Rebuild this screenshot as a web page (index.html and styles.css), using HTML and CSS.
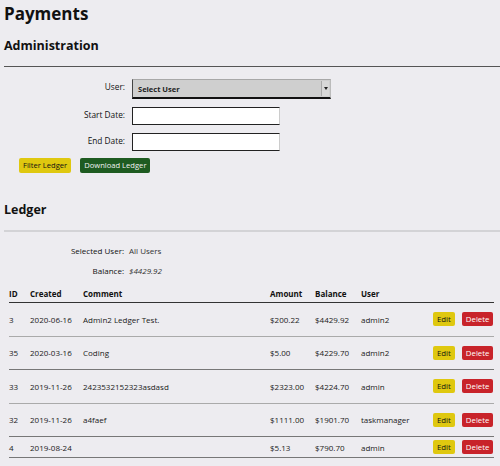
FILE: index.html
```html
<!DOCTYPE html>
<html>
<head>
<meta charset="utf-8">
<link rel="stylesheet" href="styles.css">
</head>
<body>
<div class="page">
  <h1 class="title">Payments</h1>
  <h2 class="section">Administration</h2>
  <div class="rule dark"></div>
  <div class="form">
    <label class="lbl">User:</label>
    <div class="select"><span class="sel-text">Select User</span><span class="sel-btn"><span class="tri"></span></span></div>
    <label class="lbl">Start Date:</label>
    <div class="input"></div>
    <label class="lbl">End Date:</label>
    <div class="input"></div>
  </div>
  <div class="actions">
    <span class="btn yellow">Filter Ledger</span>
    <span class="btn green">Download Ledger</span>
  </div>
  <h2 class="section ledger">Ledger</h2>
  <div class="rule light"></div>
  <div class="info">
    <span class="ilbl">Selected User:</span><span class="ival">All Users</span>
    <span class="ilbl">Balance:</span><span class="ival it">$4429.92</span>
  </div>
  <table class="tbl">
    <colgroup>
      <col class="c-id"><col class="c-created"><col class="c-comment"><col class="c-amount"><col class="c-balance"><col class="c-user"><col class="c-act">
    </colgroup>
    <thead>
      <tr><th>ID</th><th>Created</th><th>Comment</th><th>Amount</th><th>Balance</th><th>User</th><th></th></tr>
    </thead>
    <tbody>
      <tr class="tall"><td>3</td><td>2020-06-16</td><td>Admin2 Ledger Test.</td><td>$200.22</td><td>$4429.92</td><td>admin2</td><td class="act"><div class="btns"><span class="sbtn yellow">Edit</span><span class="sbtn red">Delete</span></div></td></tr>
      <tr class="tall b2"><td>35</td><td>2020-03-16</td><td>Coding</td><td>$5.00</td><td>$4229.70</td><td>admin2</td><td class="act"><div class="btns"><span class="sbtn yellow">Edit</span><span class="sbtn red">Delete</span></div></td></tr>
      <tr class="tall"><td>33</td><td>2019-11-26</td><td>2423532152323asdasd</td><td>$2323.00</td><td>$4224.70</td><td>admin</td><td class="act"><div class="btns"><span class="sbtn yellow">Edit</span><span class="sbtn red">Delete</span></div></td></tr>
      <tr class="tall b2"><td>32</td><td>2019-11-26</td><td>a4faef</td><td>$1111.00</td><td>$1901.70</td><td>taskmanager</td><td class="act"><div class="btns"><span class="sbtn yellow">Edit</span><span class="sbtn red">Delete</span></div></td></tr>
      <tr class="short b2"><td>4</td><td>2019-08-24</td><td></td><td>$5.13</td><td>$790.70</td><td>admin</td><td class="act"><div class="btns"><span class="sbtn yellow">Edit</span><span class="sbtn red">Delete</span></div></td></tr>
    </tbody>
  </table>
</div>
</body>
</html>
```
FILE: styles.css
```css
html, body {
  margin: 0;
  padding: 0;
  background: #edecf0;
}
body {
  font-family: "Open Sans", "Liberation Sans", sans-serif;
  color: #111;
}
.page {
  padding: 0 0 0 4px;
}
.title {
  font-size: 17px;
  font-weight: 700;
  margin: 0;
  padding-top: 2px;
  line-height: 24px;
}
.section {
  font-size: 12.5px;
  font-weight: 700;
  margin: 11px 0 0 0;
  line-height: 18px;
}
.section.ledger {
  margin-top: 28px;
}
.rule.dark {
  height: 1px;
  background: #555;
  margin-top: 11px;
}
.rule.light {
  height: 2px;
  background: #d3d3d6;
  margin-top: 11px;
}
.form {
  display: grid;
  grid-template-columns: 121px auto;
  column-gap: 7px;
  row-gap: 8px;
  margin-top: 12px;
  align-items: start;
  justify-items: start;
}
.lbl {
  justify-self: end;
  font-size: 8.3px;
  line-height: 10px;
  padding-top: 3px;
}
.select {
  width: 197px;
  height: 17px;
  background: #cfcfcf;
  border-top: 1px solid #a8a8a8;
  border-left: 1px solid #444;
  border-bottom: 2px solid #111;
  border-right: 1px solid #bbb;
  display: flex;
  align-items: center;
  justify-content: space-between;
}
.sel-text {
  font-size: 7.5px;
  font-weight: 700;
  padding-left: 5px;
  color: #222;
}
.sel-btn {
  width: 7px;
  height: 15px;
  background: #d8d8d8;
  border-left: 1px solid #aaa;
  display: flex;
  align-items: center;
  justify-content: center;
  margin-right: 1px;
}
.tri {
  width: 0;
  height: 0;
  border-left: 2px solid transparent;
  border-right: 2px solid transparent;
  border-top: 3px solid #222;
}
.input {
  width: 146px;
  height: 16px;
  background: #fff;
  border-top: 1px solid #222;
  border-left: 1px solid #222;
  border-bottom: 1px solid #222;
  border-right: 1px solid #ccc;
}
.actions {
  display: flex;
  gap: 9px;
  margin: 7px 0 0 15px;
}
.btn {
  font-size: 7.6px;
  line-height: 15px;
  padding: 0 4px;
  border-radius: 2px;
}
.yellow {
  background: #dfc80f;
  color: #111;
}
.green {
  background: #1e5b21;
  color: #f2f2f2;
}
.red {
  background: #c8232a;
  color: #fff;
}
.info {
  display: grid;
  grid-template-columns: 120px auto;
  column-gap: 5px;
  row-gap: 9px;
  margin-top: 13px;
  font-size: 8px;
  line-height: 11px;
}
.ilbl {
  text-align: right;
  color: #111;
}
.ival {
  color: #333;
}
.ival.it {
  font-style: italic;
}
.tbl {
  width: 485px;
  margin: 9px 0 0 5px;
  border-collapse: collapse;
  table-layout: fixed;
  font-size: 8px;
}
.c-id { width: 21px; }
.c-created { width: 53px; }
.c-comment { width: 187px; }
.c-amount { width: 45px; }
.c-balance { width: 46px; }
.c-user { width: 72px; }
.c-act { width: 61px; }
.tbl th {
  text-align: left;
  font-weight: 700;
  padding: 0;
  height: 17px;
  border-bottom: 1.5px solid #333;
  color: #111;
}
.tbl td {
  padding: 0;
  color: #1a1a1a;
  border-bottom: 1px solid #aaa;
  white-space: nowrap;
}
.tbl tr.tall td {
  height: 32.5px;
}
.tbl tr.short td {
  height: 20px;
}
.tbl tr.b2 td {
  border-bottom-color: #777;
}
.btns {
  display: flex;
  justify-content: flex-start;
  gap: 7px;
}
.sbtn {
  display: inline-block;
  font-size: 7.8px;
  line-height: 14px;
  padding: 0 4px;
  border-radius: 2px;
}
```
